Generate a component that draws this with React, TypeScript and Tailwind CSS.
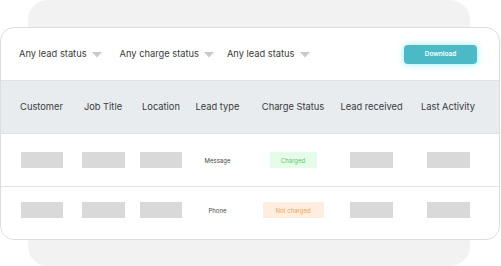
import React from "react";

const Arrow = () => (
  <svg width="10" height="6" viewBox="0 0 10 6" className="ml-[5px] mt-[2px]">
    <path d="M0 0 L10 0 L5 5.5 Z" fill="#c9c9c9" />
  </svg>
);

const cols = ["w-[61px]", "w-[62px]", "w-[54px]", "w-[59px]", "w-[92px]", "w-[65px]", "w-[88px]"];
const headers = ["Customer", "Job Title", "Location", "Lead type", "Charge Status", "Lead received", "Last Activity"];

const Ph = ({ w = "w-[42px]" }: { w?: string }) => <div className={`${w} h-[16px] bg-[#d9d9d9]`} />;

export default function App() {
  const font = { fontFamily: "Inter, 'Noto Sans', sans-serif" };
  return (
    <div className="relative w-[501px] h-[266px] bg-white overflow-hidden" style={font}>
      <div className="absolute left-[28px] top-0 w-[442px] h-[266px] rounded-[20px] bg-[#f2f2f2]" />
      <div className="absolute left-0 top-[27px] w-[500px] h-[213px] rounded-[14px] border border-[#dedede] bg-white overflow-hidden flex flex-col">
        <div className="h-[52px] flex items-center pl-[18px] pr-[22px] text-[9.3px] text-[#3a3a3a]">
          <div className="flex items-center">Any lead status<Arrow /></div>
          <div className="flex items-center ml-[18px]">Any charge status<Arrow /></div>
          <div className="flex items-center ml-[13px]">Any lead status<Arrow /></div>
          <div className="ml-auto mt-[2px] w-[73px] h-[19px] rounded-[4px] bg-[#4bb9c6] text-white text-[6.5px] font-semibold flex items-center justify-center shadow-[0_0_7px_rgba(0,220,255,0.45)]">
            Download
          </div>
        </div>
        <div className="h-[54px] bg-[#e8ecef] border-t border-[#dde2e5] flex items-center pl-[10px] text-[9.3px] text-[#3a3a3a]">
          {headers.map((h, i) => (
            <div key={h} className={`${cols[i]} shrink-0 text-center whitespace-nowrap`}>{h}</div>
          ))}
        </div>
        <div className="h-[53px] border-t border-[#e3e3e3] flex items-center pl-[10px]">
          <div className={`${cols[0]} flex justify-center`}><Ph /></div>
          <div className={`${cols[1]} flex justify-center`}><Ph w="w-[43px]" /></div>
          <div className={`${cols[2]} flex justify-center`}><Ph /></div>
          <div className={`${cols[3]} flex justify-center text-[6px] text-[#444]`}>Message</div>
          <div className={`${cols[4]} flex justify-center`}>
            <div className="w-[47px] h-[16px] bg-[#e5fde8] text-[#5fbf6c] text-[6px] flex items-center justify-center">Charged</div>
          </div>
          <div className={`${cols[5]} flex justify-center`}><Ph w="w-[43px]" /></div>
          <div className={`${cols[6]} flex justify-center`}><Ph w="w-[43px]" /></div>
        </div>
        <div className="h-[53px] border-t border-[#e3e3e3] flex items-center pl-[10px] pb-[6px]">
          <div className={`${cols[0]} flex justify-center`}><Ph /></div>
          <div className={`${cols[1]} flex justify-center`}><Ph w="w-[43px]" /></div>
          <div className={`${cols[2]} flex justify-center`}><Ph /></div>
          <div className={`${cols[3]} flex justify-center text-[6px] text-[#444]`}>Phone</div>
          <div className={`${cols[4]} flex justify-center`}>
            <div className="w-[61px] h-[16px] bg-[#fdeedf] text-[#eea25a] text-[6px] flex items-center justify-center">Not charged</div>
          </div>
          <div className={`${cols[5]} flex justify-center`}><Ph w="w-[43px]" /></div>
          <div className={`${cols[6]} flex justify-center`}><Ph w="w-[43px]" /></div>
        </div>
      </div>
    </div>
  );
}
